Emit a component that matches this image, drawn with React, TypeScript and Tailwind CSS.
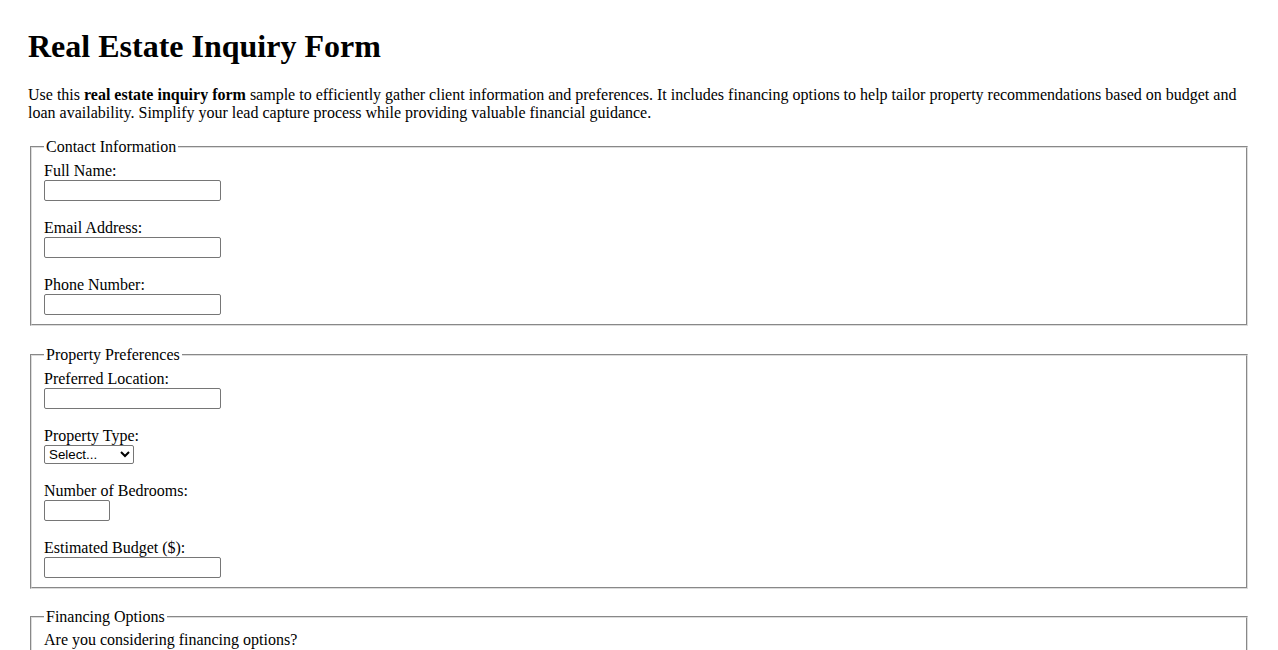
const serif = { fontFamily: '"Liberation Serif", "Times New Roman", serif' }

function Field({ label, width = 'w-[177px]', last = false }: { label: string; width?: string; last?: boolean }) {
  return (
    <div className={last ? '' : 'mb-[18px]'}>
      <label className="block h-[18px] leading-[18px]">{label}</label>
      <input
        type="text"
        className={`block h-[21px] ${width} border border-[#767676] rounded-[2px] bg-white px-[2px] text-[13.33px]`}
      />
    </div>
  )
}

function Section({ title, children }: { title: string; children: React.ReactNode }) {
  return (
    <fieldset className="mx-[2px] px-3 pt-[6px] pb-[9px] border-2 [border-style:groove] border-[#dcdcdc]">
      <legend className="px-[2px] leading-[18px]">{title}</legend>
      {children}
    </fieldset>
  )
}

export default function App() {
  return (
    <div className="bg-white text-black text-[16px] min-h-[650px] px-[28px] pt-[28px]" style={serif}>
      <h1 className="text-[32px] font-bold leading-[37px] mb-[21px]">Real Estate Inquiry Form</h1>
      <p className="leading-[18px] mb-4">
        Use this <strong>real estate inquiry form</strong> sample to efficiently gather client information and
        preferences. It includes financing options to help tailor property recommendations based on budget and loan
        availability. Simplify your lead capture process while providing valuable financial guidance.
      </p>

      <Section title="Contact Information">
        <Field label="Full Name:" />
        <Field label="Email Address:" />
        <Field label="Phone Number:" last />
      </Section>

      <div className="h-[20px]" />

      <Section title="Property Preferences">
        <Field label="Preferred Location:" />
        <div className="mb-[18px]">
          <label className="block h-[18px] leading-[18px]">Property Type:</label>
          <select
            className="block h-[19px] w-[90px] border border-[#767676] rounded-[2px] bg-white text-[13.33px] leading-none"
            style={{ fontFamily: '"Liberation Sans", Arial, sans-serif' }}
          >
            <option>Select...</option>
            <option>House</option>
            <option>Apartment</option>
            <option>Condo</option>
            <option>Townhouse</option>
          </select>
        </div>
        <Field label="Number of Bedrooms:" width="w-[66px]" />
        <Field label="Estimated Budget ($):" last />
      </Section>

      <div className="h-[19px]" />

      <Section title="Financing Options">
        <p className="leading-[18px] -mt-[1px]">Are you considering financing options?</p>
        <div className="h-[60px]" />
      </Section>
    </div>
  )
}
